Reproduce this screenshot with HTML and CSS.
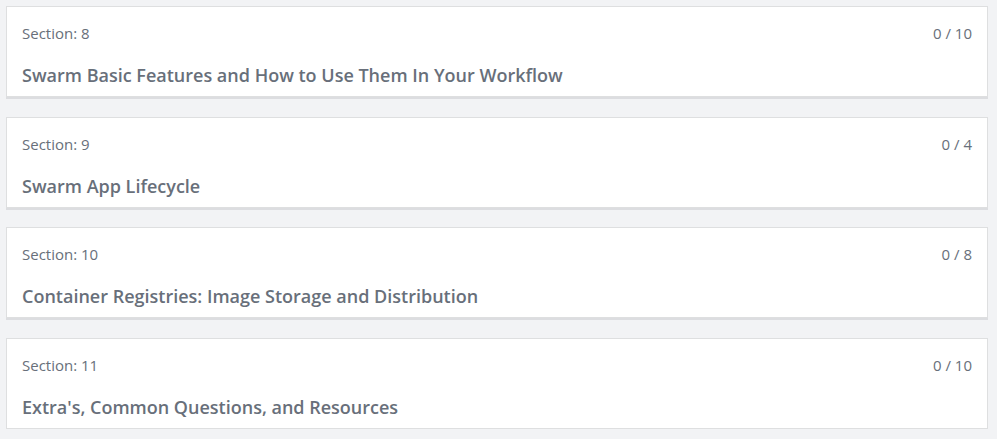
FILE: index.html
```html
<!DOCTYPE html>
<html>
<head>
<meta charset="utf-8">
<link rel="stylesheet" href="styles.css">
</head>
<body>
<div class="list">
  <div class="card">
    <div class="top"><span class="sec">Section: 8</span><span class="count">0 / 10</span></div>
    <div class="title">Swarm Basic Features and How to Use Them In Your Workflow</div>
  </div>
  <div class="card">
    <div class="top"><span class="sec">Section: 9</span><span class="count">0 / 4</span></div>
    <div class="title">Swarm App Lifecycle</div>
  </div>
  <div class="card">
    <div class="top"><span class="sec">Section: 10</span><span class="count">0 / 8</span></div>
    <div class="title">Container Registries: Image Storage and Distribution</div>
  </div>
  <div class="card">
    <div class="top"><span class="sec">Section: 11</span><span class="count">0 / 10</span></div>
    <div class="title">Extra's, Common Questions, and Resources</div>
  </div>
</div>
</body>
</html>
```
FILE: styles.css
```css
html, body {
  margin: 0;
  padding: 0;
  background: #f2f3f5;
  font-family: "Open Sans", "Liberation Sans", sans-serif;
}
.list {
  display: flex;
  flex-direction: column;
  gap: 19.67px;
  padding: 6px 9px 0 6px;
}
.card {
  box-sizing: border-box;
  height: 91px;
  background: #fff;
  border: 1px solid #dedfe0;
  box-shadow: 0 2px 0 #dcdde0;
  padding: 16px 15px 8px 15px;
}
.top {
  display: flex;
  justify-content: space-between;
  font-size: 15px;
  line-height: 20px;
  color: #686f7a;
}
.title {
  margin-top: 20px;
  font-size: 18px;
  font-weight: 600;
  line-height: 24px;
  color: #686f7a;
}
```
